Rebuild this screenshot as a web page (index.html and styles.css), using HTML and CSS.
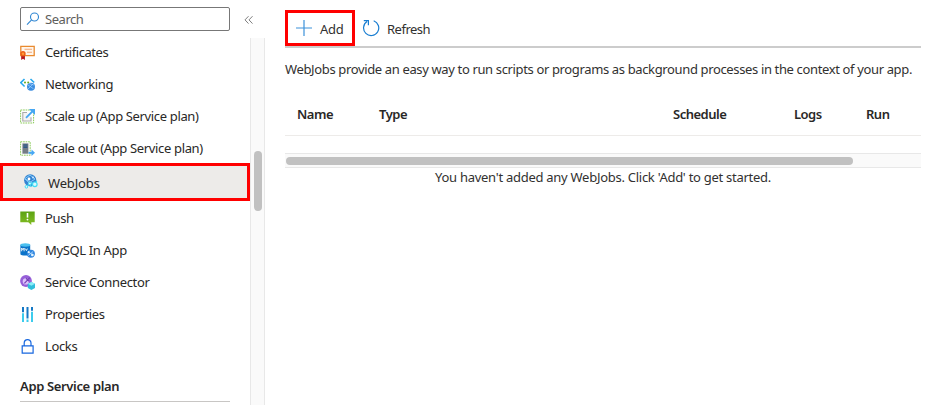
FILE: index.html
```html
<!DOCTYPE html>
<html lang="en">
<head>
<meta charset="utf-8">
<title>WebJobs</title>
<link rel="stylesheet" href="styles.css">
</head>
<body>
<div class="app">
  <aside class="sidebar">
    <div class="search-row">
      <div class="search">
        <svg class="search-icon" width="14" height="14" viewBox="0 0 14 14" fill="none" stroke="#2f86d2" stroke-width="1.1"><circle cx="8.5" cy="5" r="4"/><path d="M5.6 7.9L1 12.6"/></svg>
        <span>Search</span>
      </div>
      <svg class="collapse" width="10" height="10" viewBox="0 0 10 10" fill="none" stroke="#707070" stroke-width=".9"><path d="M4.5 1.2L1 4.9l3.5 3.7M8.5 1.2L5 4.9l3.5 3.7"/></svg>
    </div>
    <div class="menu-area">
      <nav class="menu">
        <div class="item"><svg class="icon" viewBox="0 0 15 15"><path d="M.8 1.3h13.4v9.4H.8z" fill="#fff6ec" stroke="#e98a2f" stroke-width="1.3"/><path d="M4.5 4.3h7.5M7 7.2h5" stroke="#f3a877" stroke-width="1.1"/><path d="M1.2 9.5V15l1.8-1.3L4.9 15V9.5z" fill="#b3141b"/><circle cx="3" cy="8.7" r="2.7" fill="#ed6018"/><circle cx="3" cy="8.7" r="1.2" fill="#ff9b38"/></svg><span>Certificates</span></div>
        <div class="item"><svg class="icon" viewBox="0 0 15 15"><path d="M4.5 2L.8 5.7l3.8 3.8M10.5 2L14.2 5.5" fill="none" stroke="#27a8ed" stroke-width="1.6"/><circle cx="5" cy="5.6" r="1" fill="#66a91d"/><circle cx="8.2" cy="5.6" r="1" fill="#66a91d"/><circle cx="11" cy="9.8" r="4" fill="#3c8de0"/><path d="M8 8l5.5 3.8M8 12l5-5M9 6.5l4.8 1.5" fill="none" stroke="#a5d5ff" stroke-width=".7"/></svg><span>Networking</span></div>
        <div class="item"><svg class="icon" viewBox="0 0 15 15"><path d="M.6 1h13v13H.6z" fill="none" stroke="#8dcb5d" stroke-width="1" stroke-dasharray="1.7 .8"/><path d="M7 3.5H2.8V12H11V8.2" fill="#f4f4f4" stroke="#aaa" stroke-width="1.1"/><path d="M6 8.8l6.3-6.3" stroke="#46a7f3" stroke-width="1.8"/><path d="M9 0h6v6z" fill="#46a7f3"/></svg><span>Scale up (App Service plan)</span></div>
        <div class="item"><svg class="icon" viewBox="0 0 15 15"><path d="M.6.8h9.6v13.4H.6z" fill="none" stroke="#8dcb5d" stroke-width="1" stroke-dasharray="1.7 .8"/><path d="M2.4 2.4h6v10.3h-6z" fill="#747c86"/><path d="M3.4 4h4M3.4 6.2h4" stroke="#164f8a" stroke-width="1.2"/><path d="M8.5 11.8h4" stroke="#46a7f3" stroke-width="2"/><path d="M11.5 8.5l3.5 3.3-3.5 3.2z" fill="#46a7f3"/></svg><span>Scale out (App Service plan)</span></div>
        <div class="item selected"><svg class="icon" viewBox="0 0 15 15"><circle cx="7.2" cy="6.3" r="6.1" fill="#3483d2"/><path d="M2 4.5L7 1l5 4-6 4zM2 5l9 5" fill="none" stroke="#8bd0fb" stroke-width=".9"/><circle cx="6" cy="5" r="1.4" fill="#fff"/><circle cx="10" cy="3.4" r="1" fill="#c9e7ff"/><circle cx="11.8" cy="10.3" r="2.3" fill="#d9faff" stroke="#40dcf4" stroke-width="1.2"/><circle cx="3.4" cy="12.8" r="1.3" fill="#d9faff" stroke="#40dcf4"/><circle cx="6.8" cy="9.6" r="1.4" fill="#d9faff" stroke="#40dcf4"/><path d="M4.4 11.8l1.4-1.2M8.2 9.7l1.2.2M7.4 11l1 2M13 8.5l.7-1.7" stroke="#40dcf4" stroke-width="1.2"/></svg><span>WebJobs</span></div>
        <div class="item"><svg class="icon" viewBox="0 0 15 15"><defs><linearGradient id="push" x2="0" y2="1"><stop stop-color="#5ca313"/><stop offset="1" stop-color="#83bd24"/></linearGradient></defs><path d="M.3.6h14.4v10.6h-3.4v2.8l-3-2.8h-8z" fill="url(#push)"/><path d="M7.5 2v4.6" stroke="#fff" stroke-width="1.6"/><circle cx="7.5" cy="8.6" r=".9" fill="#fff"/></svg><span>Push</span></div>
        <div class="item"><svg class="icon" viewBox="0 0 15 15"><path d="M.4 1.8v9.4c0 1.7 9.8 1.7 9.8 0V1.8" fill="#0b73c9"/><ellipse cx="5.3" cy="2" rx="4.9" ry="1.7" fill="#4bc0ef"/><path d="M1.7 8.3V5l1.2 1.8L4.1 5v3.3M5.4 5.6l1 2 1-2" fill="none" stroke="#fff" stroke-width=".9"/><circle cx="10.9" cy="10.7" r="4" fill="#3187df"/><path d="M8 9.2l5.7 2.7M8.2 12.5l5-4" stroke="#b8ddff" stroke-width=".8"/><circle cx="8.7" cy="9.2" r="1.1" fill="#dff3ff"/><circle cx="12.3" cy="12" r="1.3" fill="#dff3ff"/></svg><span>MySQL In App</span></div>
        <div class="item"><svg class="icon" viewBox="0 0 15 15"><circle cx="6" cy="6" r="5.9" fill="#965fd8"/><circle cx="5.8" cy="6.4" r="3.1" fill="#dcc2fb"/><path d="M4.4 8.3L9.8 2.7M6 3.2l3.1 3" stroke="#7541b5" stroke-width="1.2"/><path d="M7.8 8.8l3.6-1.7L15 8.8v4.3L11.4 15l-3.6-1.9z" fill="#31bedb"/><path d="M7.8 8.8l3.6-1.7L15 8.8l-3.6 1.9z" fill="#8cecf8"/></svg><span>Service Connector</span></div>
        <div class="item"><svg class="icon" viewBox="0 0 15 15"><path d="M3 0v5.3M7.5 0v11.5M12 0v3.8" stroke="#1478c5" stroke-width="2"/><path d="M3 6.2V15M7.5 12.5V15M12 4.7V15" stroke="#3ccced" stroke-width="2"/></svg><span>Properties</span></div>
        <div class="item"><svg class="icon" viewBox="0 0 15 15" fill="none" stroke="#1767df" stroke-width="1.2"><path d="M2.2 6.9h10.9v7.3H2.2zM4.2 6.9V4c0-4.4 6.8-4.4 6.8 0v2.9"/></svg><span>Locks</span></div>
        <h2 class="group"><span>App Service plan</span></h2>
      </nav>
      <div class="vscroll"><div class="vthumb"></div></div>
    </div>
  </aside>
  <main class="main">
    <div class="toolbar">
      <div class="add"><svg width="16" height="16" viewBox="0 0 16 16" fill="none" stroke="#3d92da" stroke-width="1.2"><path d="M8 0v16M0 8h16"/></svg><span>Add</span></div>
      <div class="refresh"><svg width="18" height="18" viewBox="0 0 18 18" fill="none" stroke="#187dd1" stroke-width="1.2"><path d="M11.7 1.8A7.6 7.6 0 1 1 5 2.6M1.8 1.6h4.6v4.7"/></svg><span>Refresh</span></div>
    </div>
    <p class="intro"><span>WebJobs provide an easy way to run scripts or programs as background processes in the context of your app.</span></p>
    <div class="thead"><span>Name</span><span>Type</span><span>Schedule</span><span>Logs</span><span>Run</span></div>
    <div class="hscroll"><div class="hthumb"></div></div>
    <p class="empty"><span>You haven't added any WebJobs. Click 'Add' to get started.</span></p>
  </main>
</div>
</body>
</html>
```
FILE: styles.css
```css
* { box-sizing: border-box; }
body { margin: 0; background: #fff; color: #292827; font: 13px/20px "Noto Sans", "Open Sans", sans-serif; }
.app { display: flex; width: 941px; height: 405px; overflow: hidden; }
svg { display: block; flex: none; }
.sidebar { display: flex; flex-direction: column; width: 265px; flex: none; }
.search-row { display: flex; height: 38px; padding: 7px 0 0 20px; }
.search { display: flex; align-items: center; gap: 5px; width: 210px; height: 24px; padding-left: 5px; border: 1px solid #777; border-radius: 2px; color: #605e5c; letter-spacing: -.45px; }
.collapse { margin: 8px 0 0 14px; }
.menu-area { display: flex; height: 367px; }
.menu { width: 250px; letter-spacing: -.35px; }
.item { display: flex; align-items: center; gap: 10px; height: 32px; padding-left: 20px; white-space: nowrap; }
.item:first-child { height: 30px; padding-bottom: 2px; letter-spacing: -.45px; }
.icon { width: 15px; height: 15px; }
.selected { height: 38px; margin: -1px 0 1px; padding: 1px 0 0 20px; border: 3px solid #f00; background: #edebe9; letter-spacing: -.15px; }
.selected .icon { margin-top: -2px; }
.group { display: flex; align-items: center; height: 32px; margin: 8px 20px 0; border-bottom: 1px solid #c8c6c4; font-size: 13px; font-weight: 600; letter-spacing: -.35px; }
.vscroll { width: 15px; padding: 113px 3px 0; border: solid #e8e8e8; border-width: 0 1px; background: #fafafa; }
.vthumb { width: 8px; height: 60px; border-radius: 4px; background: #c1c1c1; }
.main { width: 636px; margin-left: 20px; }
.toolbar { display: flex; height: 48px; padding-top: 10px; border-bottom: 2px solid #ccc; color: #323130; letter-spacing: -.3px; }
.add { display: flex; align-items: center; gap: 8px; width: 70px; height: 36px; padding-left: 8px; border: 3px solid #f00; }
.add span, .refresh span { padding-top: 2px; }
.refresh { display: flex; align-items: center; gap: 7px; margin-left: 7px; letter-spacing: -.5px; }
.intro { margin: 11px 0 0; height: 20px; color: #323130; white-space: nowrap; letter-spacing: -.36px; }
.thead { display: grid; grid-template-columns: 82px 294px 121px 72px 1fr; align-items: center; height: 42px; margin-top: 15px; padding: 0 0 2px 12px; border-bottom: 1px solid #edebe9; font-weight: 600; letter-spacing: -.5px; }
.hscroll { height: 15px; margin-top: 17px; padding: 3px 1px; border: solid #e8e8e8; border-width: 1px 0; background: #fafafa; }
.hthumb { width: 567px; height: 8px; border-radius: 4px; background: #c1c1c1; }
.empty { margin: -1px 0 0; padding-left: 150px; color: #323130; white-space: nowrap; letter-spacing: -.27px; }
```
